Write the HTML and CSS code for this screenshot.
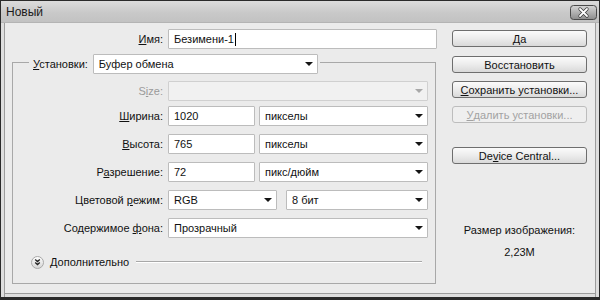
FILE: index.html
```html
<!DOCTYPE html>
<html>
<head>
<meta charset="utf-8">
<title>Новый</title>
<link rel="stylesheet" href="styles.css">
</head>
<body>
<div class="window">
  <div class="titlebar">
    <span class="title">Новый</span>
    <span class="close">
      <svg width="27" height="15" viewBox="0 0 27 15">
        <defs>
          <linearGradient id="cg" x1="0" y1="0" x2="0" y2="1">
            <stop offset="0" stop-color="#d6d6d6"/>
            <stop offset="1" stop-color="#8c8c8c"/>
          </linearGradient>
        </defs>
        <rect x="0.5" y="0.5" width="26" height="14" rx="3" fill="url(#cg)" stroke="#4a4a4a"/>
        <path d="M10 4 L17 11 M17 4 L10 11" stroke="#3a3a3a" stroke-width="3.2" stroke-linecap="round"/>
        <path d="M10 4 L17 11 M17 4 L10 11" stroke="#ffffff" stroke-width="1.8" stroke-linecap="round"/>
      </svg>
    </span>
  </div>
  <div class="content">
    <div class="left">
      <div class="name-row">
        <span class="lbl name-lbl"><u>И</u>мя:</span>
        <div class="field name-field">Безимени-1<span class="caret"></span></div>
      </div>
      <fieldset class="group">
        <legend class="legend">
          <span class="legend-lbl"><u>У</u>становки:</span>
          <div class="field select preset"><span>Буфер обмена</span><span class="arrow"></span></div>
        </legend>
        <div class="row row-size">
          <span class="lbl disabled">S<u>i</u>ze:</span>
          <div class="field select wide off"><span></span><span class="arrow"></span></div>
        </div>
        <div class="row row-w">
          <span class="lbl"><u>Ш</u>ирина:</span>
          <div class="pair">
            <div class="field num">1020</div>
            <div class="field select unit"><span>пикселы</span><span class="arrow"></span></div>
          </div>
        </div>
        <div class="row">
          <span class="lbl"><u>В</u>ысота:</span>
          <div class="pair">
            <div class="field num">765</div>
            <div class="field select unit"><span>пикселы</span><span class="arrow"></span></div>
          </div>
        </div>
        <div class="row">
          <span class="lbl">Р<u>а</u>зрешение:</span>
          <div class="pair">
            <div class="field num">72</div>
            <div class="field select unit"><span>пикс/дюйм</span><span class="arrow"></span></div>
          </div>
        </div>
        <div class="row">
          <span class="lbl">Цветовой <u>р</u>ежим:</span>
          <div class="pair pair-color">
            <div class="field select mode"><span>RGB</span><span class="arrow"></span></div>
            <div class="field select unit"><span>8 бит</span><span class="arrow"></span></div>
          </div>
        </div>
        <div class="row">
          <span class="lbl">Содержимое <u>ф</u>она:</span>
          <div class="field select wide"><span>Прозрачный</span><span class="arrow"></span></div>
        </div>
        <div class="more">
          <span class="more-icon">
            <svg width="13" height="13" viewBox="0 0 13 13">
              <defs>
                <linearGradient id="mg" x1="0" y1="0" x2="0" y2="1">
                  <stop offset="0" stop-color="#ffffff"/>
                  <stop offset="1" stop-color="#d4d4d4"/>
                </linearGradient>
              </defs>
              <circle cx="6.5" cy="6.5" r="6" fill="url(#mg)" stroke="#a8a8a8"/>
              <path d="M4.2 3.6 L6.5 5.6 L8.8 3.6 M4.2 6.6 L6.5 8.6 L8.8 6.6" fill="none" stroke="#222" stroke-width="1.3"/>
            </svg>
          </span>
          <span class="more-text">Дополнительно</span>
          <span class="more-line"></span>
        </div>
      </fieldset>
    </div>
    <div class="right">
      <div class="btn btn-ok">Да</div>
      <div class="btn">Восстановить</div>
      <div class="btn"><u>С</u>охранить установки...</div>
      <div class="btn btn-off"><u>У</u>далить установки...</div>
      <div class="btn btn-device">De<u>v</u>ice Central...</div>
      <div class="info">
        <div class="info-line">Размер изображения:</div>
        <div class="info-line">2,23М</div>
      </div>
    </div>
  </div>
</div>
</body>
</html>
```

FILE: styles.css
```css
* { box-sizing: border-box; }

html, body {
  margin: 0;
  padding: 0;
  background: #ebebeb;
}

body {
  font-family: "Liberation Sans", Arial, sans-serif;
  font-size: 11px;
  color: #111;
}

.window {
  width: 600px;
  height: 300px;
  border: 1px solid #2a2a2a;
  border-bottom-width: 3px;
  background: #ebebeb;
  display: flex;
  flex-direction: column;
  overflow: hidden;
}

.titlebar {
  height: 22px;
  flex: none;
  display: flex;
  align-items: center;
  justify-content: space-between;
  padding: 0 2px 0 5px;
  background: linear-gradient(to bottom, #dcdcdc 0%, #c9c9c9 55%, #c2c2c2 100%);
  border-bottom: 1px solid #b4b4b4;
}

.title {
  font-size: 12px;
  color: #1a1a1a;
}

.close {
  display: flex;
  margin-top: 1px;
}

.content {
  flex: 1;
  display: flex;
  padding: 6px 11px 0 11px;
  box-shadow: inset 3px 0 0 #dedede, inset 4px 0 0 #9c9c9c, inset -3px 0 0 #dedede, inset -4px 0 0 #9c9c9c, inset 0 -3px 0 #dedede, inset 0 -4px 0 #9c9c9c;
}

.left {
  width: 425px;
  flex: none;
}

.lbl {
  width: 150px;
  flex: none;
  text-align: right;
  white-space: nowrap;
}

.lbl.disabled { color: #9a9a9a; }

u { text-decoration: underline; text-underline-offset: 1px; }

.name-row {
  display: flex;
  align-items: center;
  gap: 5px;
  height: 20px;
}

.name-lbl { width: 151px; }

.field {
  height: 20px;
  background: #ffffff;
  border: 1px solid #bcbcbc;
  border-radius: 1px;
  display: flex;
  align-items: center;
  padding: 0 5px;
  white-space: nowrap;
}

.name-field {
  width: 269px;
}

.caret {
  display: inline-block;
  width: 1px;
  height: 13px;
  background: #000;
  margin-left: 1px;
}

.group {
  margin: 1px 0 0 0;
  width: 424px;
  border: 1px solid #a8a8a8;
  padding: 7px 6px 14px 0;
  min-width: 0;
}

.legend {
  display: flex;
  align-items: center;
  gap: 5px;
  margin-left: 16px;
  padding: 4px 2px 0 4px;
}

.legend-lbl { white-space: nowrap; }

.select {
  justify-content: space-between;
  padding-right: 4px;
}

.arrow {
  width: 0;
  height: 0;
  border-left: 4px solid transparent;
  border-right: 4px solid transparent;
  border-top: 4px solid #151515;
  flex: none;
}

.preset { width: 225px; }

.row {
  display: flex;
  align-items: center;
  gap: 5px;
  height: 20px;
  margin-top: 8px;
}

.row-size { margin-top: 0; }
.row-w { margin-top: 5px; }

.wide { width: 260px; }

.off {
  background: #f1f1f1;
  border-color: #d0d0d0;
}

.off .arrow { border-top-color: #a8a8a8; }

.pair {
  width: 260px;
  display: flex;
  gap: 4px;
}

.pair-color { gap: 9px; }

.num { width: 87px; flex: none; }
.unit { flex: 1; }
.mode { width: 109px; flex: none; }

.more {
  display: flex;
  align-items: center;
  height: 14px;
  margin-top: 17px;
  padding-left: 18px;
  margin-right: 7px;
}

.more-icon { display: flex; }

.more-text {
  margin-left: 6px;
  white-space: nowrap;
}

.more-line {
  flex: 1;
  height: 2px;
  margin-left: 7px;
  border-top: 1px solid #a8a8a8;
  border-bottom: 1px solid #ffffff;
}

.right {
  width: 135px;
  margin-left: 15px;
  margin-top: 1px;
  display: flex;
  flex-direction: column;
  gap: 8px;
}

.btn {
  height: 17px;
  border: 1px solid #6e6e6e;
  border-radius: 3px;
  background: linear-gradient(to bottom, #fbfbfb 0%, #ececec 50%, #d9d9d9 100%);
  display: flex;
  align-items: center;
  justify-content: center;
  white-space: nowrap;
  color: #111;
}

.btn-ok { margin-bottom: 1px; }

.btn-off {
  border-color: #bdbdbd;
  background: #efefef;
  color: #a2a2a2;
}

.btn-device { margin-top: 16px; }

.info {
  margin-top: 51px;
  display: flex;
  flex-direction: column;
  align-items: center;
  gap: 8px;
}

.info-line {
  height: 14px;
  line-height: 14px;
  white-space: nowrap;
}
```
